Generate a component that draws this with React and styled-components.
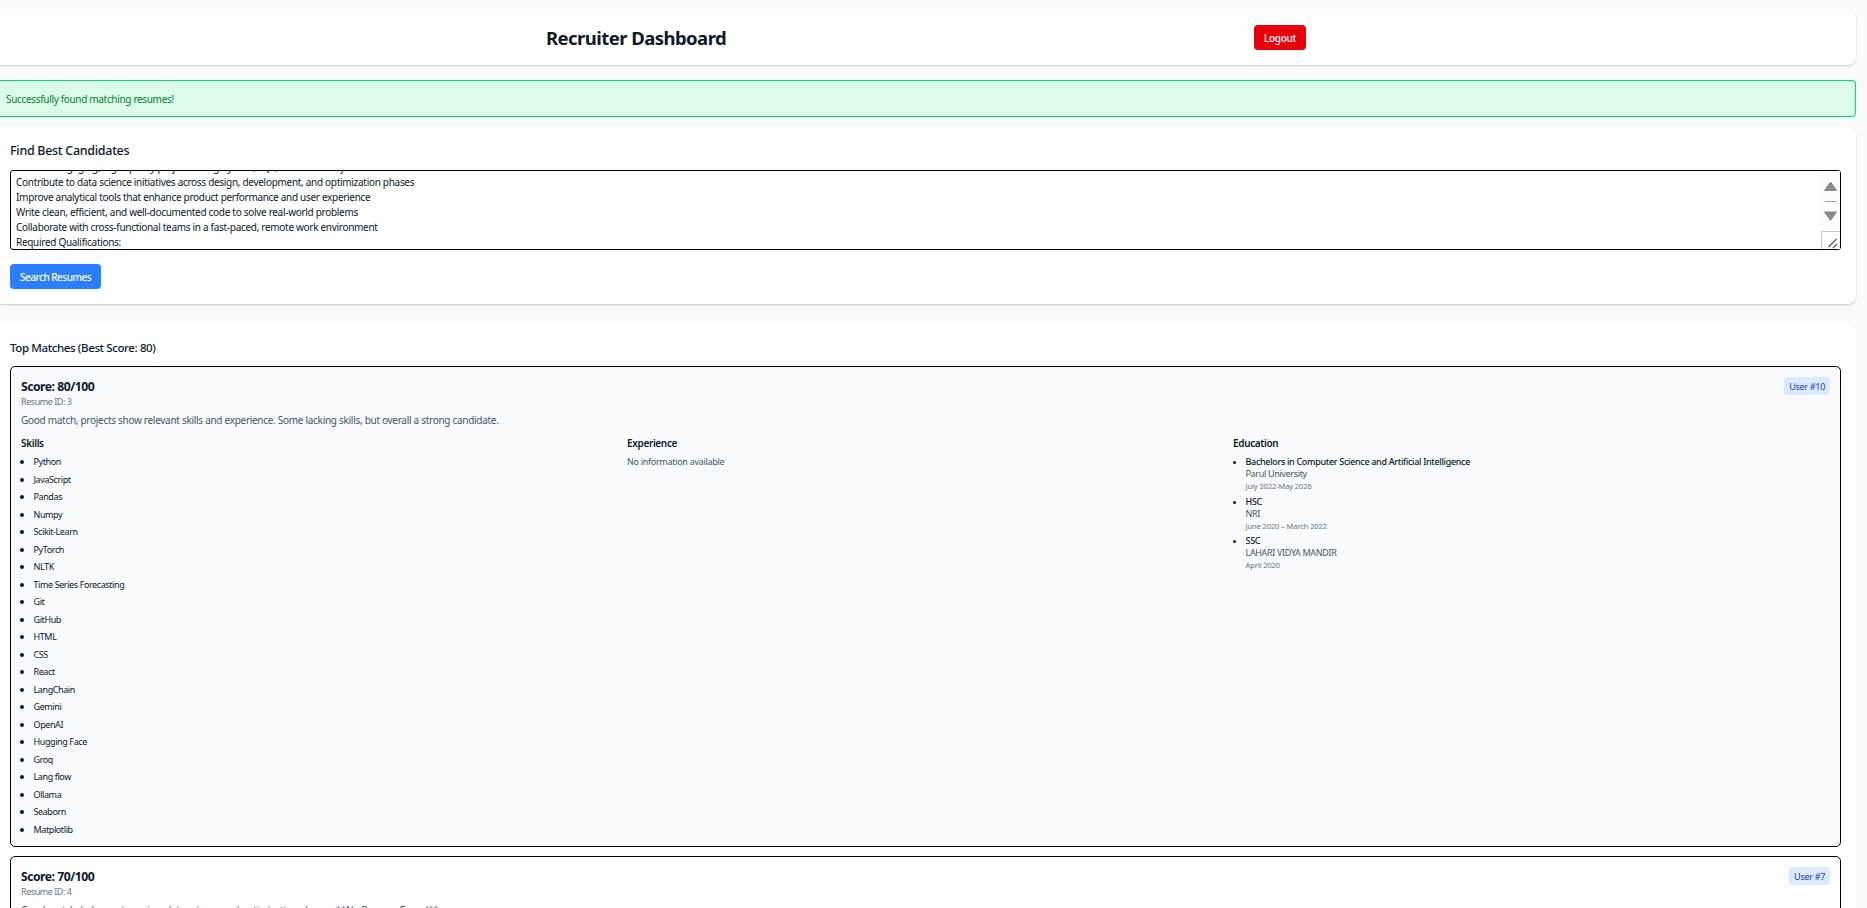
import React, { useEffect, useRef } from "react";
import styled, { createGlobalStyle } from "styled-components";

const Global = createGlobalStyle`
  html, body { margin: 0; padding: 0; overflow: hidden; height: 908px; background: #f9fafb; }
  * { box-sizing: border-box; }
  body { font-family: "Noto Sans", "Open Sans", sans-serif; color: #101828; }
`;

const Page = styled.div`
  display: flex;
  flex-direction: column;
  width: 1856px;
  padding-top: 10px;
`;

const HeaderBar = styled.header`
  height: 55px;
  display: flex;
  align-items: center;
  gap: 528px;
  padding-left: 546px;
  background: #fff;
  border-radius: 0 8px 8px 0;
  box-shadow: 0 1px 2px rgba(0, 0, 0, 0.2);
`;

const Title = styled.h1`
  margin: 0;
  width: 180px;
  font-size: 18.5px;
  letter-spacing: -0.55px;
  font-weight: 700;
  white-space: nowrap;
  color: #101828;
`;

const Button = styled.button`
  display: flex;
  align-items: center;
  justify-content: center;
  border: 0;
  border-radius: 4px;
  padding: 0;
  height: 25px;
  width: ${(p) => p.$w}px;
  color: #fff;
  font: inherit;
  font-size: 10px;
  letter-spacing: ${(p) => p.$track}px;
  font-weight: 500;
  background: ${(p) => p.$bg};
`;

const Alert = styled.div`
  height: 37px;
  margin-top: 15px;
  display: flex;
  align-items: center;
  padding-left: 6px;
  background: #dcfce7;
  border: 1px solid #05df72;
  border-left: 0;
  border-radius: 0 4px 4px 0;
  color: #008236;
  font-size: 10px;
  letter-spacing: -0.33px;
`;

const Panel = styled.section`
  margin-top: ${(p) => p.$mt}px;
  height: ${(p) => p.$h}px;
  padding: ${(p) => p.$pt}px 15px 0 10px;
  background: #fff;
  border-radius: 0 8px 8px 0;
  box-shadow: ${(p) => (p.$flat ? "none" : "0 1px 2px rgba(0,0,0,.2)")};
`;

const SectionTitle = styled.h2`
  margin: 0;
  font-size: ${(p) => p.$size}px;
  letter-spacing: ${(p) => p.$track}px;
  line-height: 18px;
  font-weight: 500;
  color: #101828;
`;

const AreaWrap = styled.div`
  position: relative;
  height: 80px;
  margin: 10px 0 14px;
`;

const Area = styled.textarea`
  display: block;
  width: 100%;
  height: 100%;
  padding: 4px 40px 4px 5px;
  border: 1px solid #000;
  border-radius: 3px;
  outline: 0;
  resize: none;
  overflow: hidden;
  background: #fff;
  color: #101828;
  font-family: inherit;
  font-size: 10px;
  letter-spacing: -0.3px;
  line-height: 15px;
`;

const ScrollIcons = styled.svg`
  position: absolute;
  right: 1px;
  top: 1px;
  width: 19px;
  height: 78px;
`;

const MatchCard = styled.article`
  position: relative;
  margin-top: ${(p) => p.$mt}px;
  height: ${(p) => p.$h}px;
  padding: 11px 10px 0;
  background: ${(p) => (p.$tinted ? "#f9fafb" : "#fff")};
  border: 1px solid #000;
  border-radius: 5px;
`;

const Score = styled.h3`
  margin: 0;
  font-size: 12.2px;
  letter-spacing: -0.5px;
  line-height: 18px;
  font-weight: 700;
  color: #101828;
`;

const ResumeId = styled.p`
  margin: 0;
  font-size: 9px;
  letter-spacing: -0.45px;
  line-height: 12px;
  color: #6a7282;
`;

const Summary = styled.p`
  margin: 4px 0 0;
  font-size: 10px;
  letter-spacing: -0.29px;
  line-height: 16px;
  color: #4a5565;
  white-space: nowrap;
`;

const Badge = styled.span`
  position: absolute;
  right: 10px;
  top: 10px;
  height: 18px;
  display: flex;
  align-items: center;
  padding: 0 5px;
  border-radius: 3px;
  background: #dbeafe;
  color: #193cb8;
  font-size: 9px;
  letter-spacing: -0.3px;
`;

const Columns = styled.div`
  display: grid;
  grid-template-columns: repeat(3, 1fr);
  column-gap: 9px;
  margin-top: 8px;
`;

const ColTitle = styled.h4`
  margin: 0 0 3px;
  font-size: 10px;
  letter-spacing: -0.35px;
  line-height: 14px;
  font-weight: 600;
  color: #101828;
`;

const Bullets = styled.ul`
  margin: 0;
  padding: 0 0 0 12.5px;
  list-style: disc;
`;

const EduList = styled(Bullets)`
  padding-top: 2px;
`;

const Skill = styled.li`
  height: 17.5px;
  line-height: 17.5px;
  font-size: 9px;
  letter-spacing: -0.4px;
  color: #101828;
  &::marker { font-size: 10px; }
`;

const Empty = styled.p`
  margin: 0;
  line-height: 17.5px;
  font-size: 9px;
  letter-spacing: -0.3px;
  color: #4a5565;
`;

const EduItem = styled.li`
  margin-bottom: 1.5px;
  color: #101828;
  font-size: 9px;
`;

const Degree = styled.div`
  line-height: 13px;
  font-weight: 500;
  letter-spacing: -0.32px;
  color: #101828;
`;

const School = styled.div`
  line-height: 12px;
  letter-spacing: -0.34px;
  color: #4a5565;
`;

const Dates = styled.div`
  line-height: 13px;
  font-size: 7.5px;
  letter-spacing: -0.1px;
  color: #6a7282;
`;

const skills = ["Python","JavaScript","Pandas","Numpy","Scikit-Learn","PyTorch","NLTK","Time Series Forecasting","Git","GitHub","HTML","CSS","React","LangChain","Gemini","OpenAI","Hugging Face","Groq","Lang flow","Ollama","Seaborn","Matplotlib"];

const education = [
  ["Bachelors in Computer Science and Artificial Intelligence", "Parul University", "July 2022-May 2026"],
  ["HSC", "NRI", "June 2020 – March 2022"],
  ["SSC", "LAHARI VIDYA MANDIR", "April 2020"],
];

const jobText = `Work on engaging, high-quality projects using Python, SQL, and data analysis
Contribute to data science initiatives across design, development, and optimization phases
Improve analytical tools that enhance product performance and user experience
Write clean, efficient, and well-documented code to solve real-world problems
Collaborate with cross-functional teams in a fast-paced, remote work environment
Required Qualifications:
Strong knowledge of Python and SQL
Experience with machine learning libraries`;

export default function App() {
  const ref = useRef(null);
  useEffect(() => {
    if (ref.current) ref.current.scrollTop = 15;
  }, []);
  return (
    <Page>
      <Global />
      <HeaderBar>
        <Title>Recruiter Dashboard</Title>
        <Button $w={52} $bg="#e7000b" $track={-0.3}>Logout</Button>
      </HeaderBar>
      <Alert>Successfully found matching resumes!</Alert>
      <Panel $mt={10} $h={177} $pt={15}>
        <SectionTitle $size={12.5} $track={-0.3}>Find Best Candidates</SectionTitle>
        <AreaWrap>
          <Area ref={ref} readOnly defaultValue={jobText} />
          <ScrollIcons viewBox="0 0 19 78">
            <rect x="0" y="0" width="19" height="78" fill="#fcfcfc" />
            <path d="M9.5 11 L3.5 19.5 H15.5 Z" fill="#8a8a8a" stroke="#8a8a8a" strokeLinejoin="round" />
            <path d="M4 30.5 H15.5" stroke="#a0a0a0" />
            <path d="M9.5 49.5 L3.5 41 H15.5 Z" fill="#8a8a8a" stroke="#8a8a8a" strokeLinejoin="round" />
            <path d="M.5 78 V60.5 H19" fill="#fff" stroke="#c8c8c8" />
            <path d="M7.5 76 L15.5 68 M12 77 L16 73" stroke="#555" strokeWidth="1.1" />
          </ScrollIcons>
        </AreaWrap>
        <Button $w={91} $bg="#2b7fff" $track={-0.5}>Search Resumes</Button>
      </Panel>
      <Panel $mt={20} $h={600} $pt={15} $flat>
        <SectionTitle $size={11.5} $track={-0.38}>Top Matches (Best Score: 80)</SectionTitle>
        <MatchCard $tinted $mt={9} $h={481}>
          <Score>Score: 80/100</Score>
          <ResumeId>Resume ID: 3</ResumeId>
          <Badge>User #10</Badge>
          <Summary>Good match, projects show relevant skills and experience. Some lacking skills, but overall a strong candidate.</Summary>
          <Columns>
            <div>
              <ColTitle>Skills</ColTitle>
              <Bullets>{skills.map((s) => <Skill key={s}>{s}</Skill>)}</Bullets>
            </div>
            <div>
              <ColTitle>Experience</ColTitle>
              <Empty>No information available</Empty>
            </div>
            <div>
              <ColTitle>Education</ColTitle>
              <EduList>
                {education.map(([d, s, t]) => (
                  <EduItem key={d}>
                    <Degree>{d}</Degree>
                    <School>{s}</School>
                    <Dates>{t}</Dates>
                  </EduItem>
                ))}
              </EduList>
            </div>
          </Columns>
        </MatchCard>
        <MatchCard $mt={9} $h={200}>
          <Score>Score: 70/100</Score>
          <ResumeId>Resume ID: 4</ResumeId>
          <Badge>User #7</Badge>
          <Summary>Good match, led experience in a data science and optimization phases. **No Resume Found**</Summary>
        </MatchCard>
      </Panel>
    </Page>
  );
}
